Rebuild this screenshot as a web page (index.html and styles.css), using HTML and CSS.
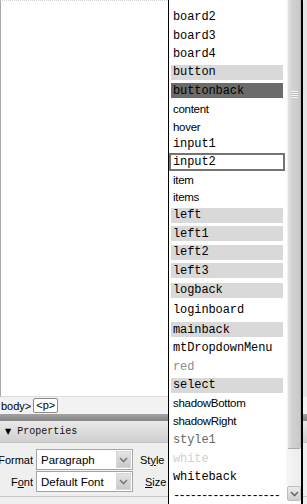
FILE: index.html
```html
<!DOCTYPE html>
<html>
<head>
<meta charset="utf-8">
<link rel="stylesheet" href="styles.css">
</head>
<body>
<div class="app">
  <div class="doc"></div>
  <div class="status"><span class="crumb">body&gt;</span><span class="tag-p">&lt;p&gt;</span></div>
  <div class="divider"></div>
  <div class="props-head"><span class="tri">&#9660;</span><span class="props-title">Properties</span></div>
  <div class="props-body">
    <div class="prow">
      <span class="plabel">Format</span>
      <div class="select"><span class="sval">Paragraph</span><span class="sbtn"><svg width="9" height="6" viewBox="0 0 9 6"><path d="M1 1 L4.5 4.5 L8 1" fill="none" stroke="#7a7a7a" stroke-width="1.6"/></svg></span></div>
      <span class="plabel2">St<u>y</u>le</span>
    </div>
    <div class="prow">
      <span class="plabel">F<u>o</u>nt</span>
      <div class="select"><span class="sval">Default Font</span><span class="sbtn"><svg width="9" height="6" viewBox="0 0 9 6"><path d="M1 1 L4.5 4.5 L8 1" fill="none" stroke="#7a7a7a" stroke-width="1.6"/></svg></span></div>
      <span class="plabel2 size"><u>S</u>ize</span>
    </div>
    <div class="pline"></div>
  </div>
</div>

<div class="dropdown">
  <ul class="items">
    <li class="row r19">board2</li>
    <li class="row r19">board3</li>
    <li class="row r18">board4</li>
    <li class="row r18"><span class="hl">button</span></li>
    <li class="row r19"><span class="hl dark">buttonback</span></li>
    <li class="row r18 sans">content</li>
    <li class="row r17 sans">hover</li>
    <li class="row r18">input1</li>
    <li class="row r18 boxed">input2</li>
    <li class="row r17 sans">item</li>
    <li class="row r18 sans">items</li>
    <li class="row r18"><span class="hl">left</span></li>
    <li class="row r19"><span class="hl">left1</span></li>
    <li class="row r18"><span class="hl">left2</span></li>
    <li class="row r19"><span class="hl">left3</span></li>
    <li class="row r20"><span class="hl">logback</span></li>
    <li class="row r20">loginboard</li>
    <li class="row r19"><span class="hl">mainback</span></li>
    <li class="row r18">mtDropdownMenu</li>
    <li class="row r19 gray">red</li>
    <li class="row r18"><span class="hl">select</span></li>
    <li class="row r18 sans">shadowBottom</li>
    <li class="row r18 sans">shadowRight</li>
    <li class="row r19 mid">style1</li>
    <li class="row r19 faint">white</li>
    <li class="row r18">whiteback</li>
    <li class="row r19 dashes">-------------------</li>
  </ul>
  <div class="scrollbar">
    <div class="thumb"><span class="grip"></span></div>
    <div class="track"></div>
    <div class="down"><svg width="9" height="6" viewBox="0 0 9 6"><path d="M1 1 L4.5 4.5 L8 1" fill="none" stroke="#6a6a6a" stroke-width="1.6"/></svg></div>
  </div>
</div>
</body>
</html>
```
FILE: styles.css
```css
html, body {
  margin: 0;
  padding: 0;
}
body {
  width: 307px;
  height: 504px;
  overflow: hidden;
  position: relative;
  background: #fff;
  font-family: "Liberation Sans", Arial, sans-serif;
}
.app {
  display: flex;
  flex-direction: column;
  height: 504px;
}
.doc {
  flex: none;
  background: #fff;
  border-top: 1px dotted #d6d6d6;
  border-left: 1px solid #a8a8a8;
  border-right: 4px solid #e4e4e4;
  border-bottom: 1px solid #dcdcdc;
  box-sizing: content-box;
  height: 395px;
}
.status {
  height: 17px;
  flex: none;
  background: #f2f2f2;
  display: flex;
  align-items: center;
  font-size: 11px;
  color: #000;
  padding-left: 1px;
}
.crumb {
  margin-right: 2px;
}
.tag-p {
  background: #fff;
  border: 1px solid #8a8a8a;
  border-radius: 2px;
  height: 13px;
  line-height: 13px;
  padding: 0 2px;
}
.divider {
  height: 7px;
  flex: none;
  background: linear-gradient(#a2a2a2, #858585);
}
.props-head {
  height: 22px;
  flex: none;
  background: linear-gradient(#e9e9e9, #cfcfcf);
  display: flex;
  align-items: center;
  padding-left: 5px;
  border-bottom: 1px solid #c4c4c4;
  box-sizing: border-box;
}
.tri {
  font-family: "DejaVu Sans", sans-serif;
  font-size: 8px;
  margin-right: 6px;
}
.props-title {
  font-family: "Liberation Mono", monospace;
  font-size: 10px;
  color: #111;
}
.props-body {
  flex: 1;
  background: #efefef;
  display: flex;
  flex-direction: column;
  gap: 1px;
  padding-top: 6px;
}
.prow {
  display: flex;
  align-items: center;
  height: 21px;
}
.plabel {
  width: 33px;
  text-align: right;
  white-space: nowrap;
  font-size: 11px;
  direction: rtl;
  flex: none;
}
.plabel u, .plabel2 u {
  text-decoration: underline;
}
.select {
  margin-left: 3px;
  width: 97px;
  height: 21px;
  box-sizing: border-box;
  background: #fff;
  border: 1px solid #a5a5a5;
  display: flex;
  align-items: center;
  justify-content: space-between;
  padding: 1px;
}
.sval {
  font-size: 11.5px;
  padding-left: 3px;
}
.sbtn {
  width: 15px;
  height: 17px;
  background: linear-gradient(#e4e4e4, #c9c9c9);
  border: 1px solid #d6d6d6;
  box-sizing: border-box;
  display: flex;
  align-items: center;
  justify-content: center;
}
.plabel2 {
  font-size: 11px;
  margin-left: 7px;
}
.plabel2.size {
  margin-left: 12px;
}
.pline {
  margin-top: 3px;
  border-top: 1px solid #c8c8c8;
}

/* dropdown list overlay */
.dropdown {
  position: absolute;
  left: 168px;
  top: 0;
  width: 132px;
  height: 520px;
  background: #fff;
  border-left: 1px solid #000;
  border-right: 2px solid #000;
  display: flex;
}
.items {
  list-style: none;
  margin: 0;
  padding: 7px 0 0 0;
  width: 117px;
  flex: none;
}
.row {
  display: flex;
  align-items: center;
  font-family: "Liberation Mono", monospace;
  font-size: 12px;
  letter-spacing: -0.1px;
  color: #000;
  padding-left: 4px;
  white-space: nowrap;
  box-sizing: border-box;
}
.r17 { height: 17px; }
.r18 { height: 18px; }
.r19 { height: 19px; }
.r20 { height: 20px; }
.row.sans {
  font-family: "Liberation Sans", Arial, sans-serif;
  font-size: 11.5px;
  letter-spacing: -0.3px;
}
.hl {
  display: flex;
  align-items: center;
  height: 15px;
  margin-left: -2px;
  padding-left: 2px;
  width: 110px;
  background: #d9d9d9;
}
.hl.dark {
  background: #6b6b6b;
}
.row.boxed {
  border: 2px solid #737373;
  width: 116px;
  padding-left: 2px;
}
.row.gray { color: #8c8c8c; }
.row.mid { color: #666; }
.row.faint { color: #d2d2d2; }
.row.dashes {
  letter-spacing: -1.6px;
  padding-left: 4px;
}
.scrollbar {
  width: 15px;
  flex: none;
  display: flex;
  flex-direction: column;
}
.thumb {
  height: 449px;
  margin: 0 0 0 1px;
  background: linear-gradient(90deg, #e2e2e2, #d0d0d0 40%, #c9c9c9);
  border-right: 1px solid #b8b8b8;
  border-bottom: 1px solid #a9a9a9;
  border-left: 1px solid #f2f2f2;
  border-radius: 0 0 2px 2px;
  box-sizing: border-box;
  position: relative;
}
.grip {
  position: absolute;
  left: 3px;
  top: 91px;
  width: 7px;
  height: 7px;
  background: repeating-linear-gradient(#f4f4f4 0 1px, #bdbdbd 1px 2px);
}
.track {
  height: 37px;
  background: linear-gradient(90deg, #f6f6f6, #ececec);
}
.down {
  height: 15px;
  margin-left: 1px;
  background: linear-gradient(#ececec, #cfcfcf);
  border: 1px solid #bdbdbd;
  border-radius: 2px;
  box-sizing: border-box;
  display: flex;
  align-items: center;
  justify-content: center;
}
```
